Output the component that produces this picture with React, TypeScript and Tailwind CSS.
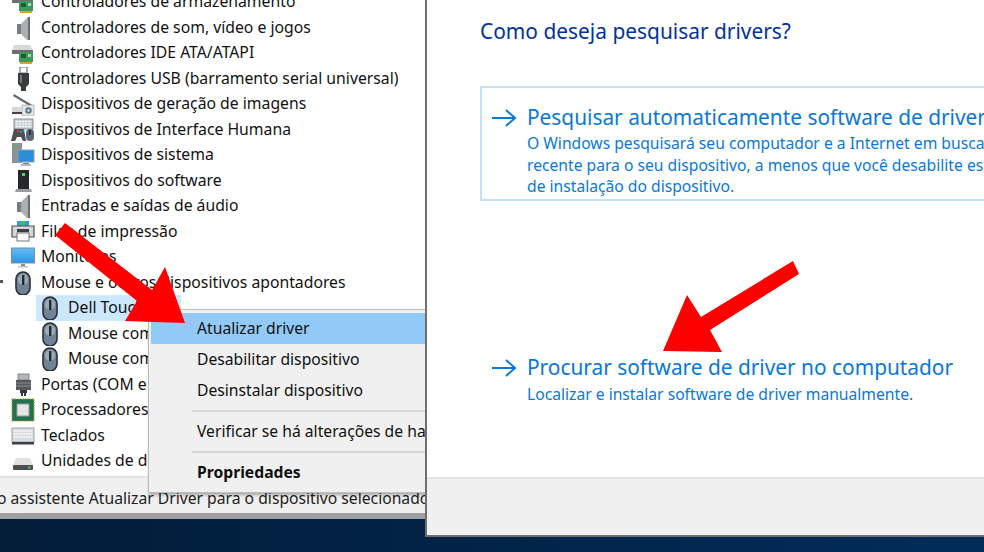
import React from "react";

type IconProps = { kind: string };

function Icon({ kind }: IconProps) {
  const c = "w-[24px] h-[24px] shrink-0";
  switch (kind) {
    case "storage":
    case "ide":
      return (
        <svg viewBox="0 0 24 24" className={c}>
          <path d="M3 4h16l3 6H1z" fill="#d8d8d8" />
          <rect x="1" y="9" width="21" height="4" fill="#6b6f72" />
          <rect x="8" y="11" width="14" height="10" fill="#3c9a5a" />
          <rect x="10" y="13" width="5" height="4" fill="#1e5a36" />
          <rect x="17" y="13" width="3" height="3" fill="#a6d8b0" />
          <rect x="9" y="21" width="12" height="2" fill="#d9a520" />
        </svg>
      );
    case "sound":
      return (
        <svg viewBox="0 0 24 24" className={c}>
          <path d="M6 8h4l7-7h1v24h-1l-7-7H6z" fill="#a9afb3" />
          <path d="M6 8h4v10H6z" fill="#777d82" />
          <path d="M17 1h2v24h-2z" fill="#676d70" />
        </svg>
      );
    case "usb":
      return (
        <svg viewBox="0 0 24 24" className={c}>
          <path d="M9 0h7v6H9z" fill="none" stroke="#777" strokeWidth="1.2" />
          <path d="M7 6h11v11l-3 3v4h-5v-4l-3-3z" fill="#3a3d40" />
          <rect x="9" y="8" width="2" height="8" fill="#777" />
        </svg>
      );
    case "imaging":
      return (
        <svg viewBox="0 0 24 24" className={c}>
          <path d="M3 2l20 12-1 2L2 4z" fill="#62676b" />
          <path d="M11 13h12v11H11z" fill="#e4e7e8" stroke="#8a9094" strokeWidth="0.6" />
          <circle cx="17.5" cy="18.5" r="3.2" fill="#5f7684" />
          <circle cx="17.5" cy="18.5" r="1.4" fill="#b9d3df" />
          <path d="M1 15h10v5H1z" fill="#d5d8d9" />
          <path d="M1 20h10v2H1z" fill="#3e4245" />
        </svg>
      );
    case "hid":
      return (
        <svg viewBox="0 0 24 24" className={c}>
          <rect x="3" y="1" width="19" height="10" fill="#cfd6dc" stroke="#6c7278" strokeWidth="0.8" />
          <path d="M5 3.5h15M5 6h15M5 8.5h15" stroke="#f6f8f9" strokeDasharray="2 1" />
          <path d="M3 11h10l2 12h-3l-2-4H6l-2 4H0z" fill="#4a4f55" />
          <circle cx="7" cy="13" r="1.4" fill="#d33" />
          <circle cx="10" cy="14" r="1.2" fill="#2aa84a" />
          <circle cx="12" cy="12.5" r="1.2" fill="#2a7ad8" />
          <rect x="15" y="11" width="8" height="12" rx="4" fill="#5c6772" />
          <rect x="18.2" y="12" width="1.5" height="5" fill="#1e2226" />
        </svg>
      );
    case "system":
      return (
        <svg viewBox="0 0 24 24" className={c}>
          <rect x="1" y="0" width="10" height="20" fill="#8d9294" />
          <rect x="3" y="2" width="3" height="2" fill="#4fc04f" />
          <rect x="7" y="7" width="16" height="12" fill="#2b8fd8" stroke="#8aa3b5" />
          <rect x="12" y="20" width="6" height="1" fill="#777" />
          <rect x="10" y="21" width="10" height="2" fill="#bbb" />
        </svg>
      );
    case "software":
      return (
        <svg viewBox="0 0 24 24" className={c}>
          <rect x="7" y="1" width="11" height="19" fill="#24282b" />
          <rect x="11" y="4" width="3" height="3" fill="#4fd35f" />
          <path d="M5 20h15l1 3H4z" fill="#9a9da0" />
        </svg>
      );
    case "printer":
      return (
        <svg viewBox="0 0 24 24" className={c}>
          <rect x="6" y="1" width="12" height="5" fill="#3a9ad8" />
          <rect x="10" y="1" width="4" height="5" fill="#3fbf6f" />
          <path d="M1 6h22v11H1z" fill="#d5d7d8" stroke="#4d5154" strokeWidth="1.2" />
          <rect x="6" y="9" width="12" height="3" fill="#3d4144" />
          <rect x="6" y="13" width="12" height="8" fill="#fbfbfb" stroke="#55585b" strokeWidth="0.8" />
        </svg>
      );
    case "monitor":
      return (
        <svg viewBox="0 0 24 24" className={c}>
          <defs>
            <linearGradient id="scr" x1="0" y1="0" x2="0" y2="1">
              <stop offset="0" stopColor="#62bdf5" />
              <stop offset="1" stopColor="#2e93e2" />
            </linearGradient>
          </defs>
          <rect x="0.5" y="3" width="23" height="15" fill="url(#scr)" stroke="#79909f" />
          <rect x="10" y="19" width="4" height="2" fill="#888" />
          <rect x="7" y="21" width="10" height="1.5" fill="#bfc3c5" />
        </svg>
      );
    case "mouse":
      return (
        <svg viewBox="0 0 24 24" className={c}>
          <rect x="5" y="1" width="14" height="23" rx="7" fill="#6f8296" stroke="#2b2e31" strokeWidth="1.6" />
          <rect x="7" y="3" width="10" height="11" rx="5" fill="#9cabb9" />
          <rect x="11" y="4" width="2.4" height="10" fill="#26292c" />
        </svg>
      );
    case "port":
      return (
        <svg viewBox="0 0 24 24" className={c}>
          <rect x="7" y="1" width="11" height="6" fill="#b5b8ba" stroke="#666" strokeWidth="0.7" />
          <rect x="5" y="7" width="15" height="10" fill="#55595c" />
          <path d="M5 10h15M5 13h15" stroke="#8a8e91" />
          <path d="M9 17h7v3h-1v3h-2v-3h-1v3h-2v-3H9z" fill="#33363a" />
        </svg>
      );
    case "cpu":
      return (
        <svg viewBox="0 0 24 24" className={c}>
          <rect x="1" y="1" width="22" height="22" fill="#23724f" stroke="#b09a2c" strokeWidth="1.2" strokeDasharray="1.5 1" />
          <rect x="6" y="6" width="12" height="12" fill="#e6e6e6" stroke="#9a9a9a" />
        </svg>
      );
    case "keyboard":
      return (
        <svg viewBox="0 0 24 24" className={c}>
          <rect x="1" y="4" width="22" height="14" fill="#d9dde0" stroke="#9ba0a4" />
          <path d="M3 7h18M3 10h18M3 13h18" stroke="#fbfcfc" strokeWidth="1.4" strokeDasharray="1.6 0.8" />
          <rect x="1" y="18" width="22" height="2.5" fill="#3d4043" />
        </svg>
      );
    case "disk":
      return (
        <svg viewBox="0 0 24 24" className={c}>
          <path d="M5 9h14l3 7H2z" fill="#e0e2e3" />
          <rect x="2" y="16" width="20" height="5" rx="1" fill="#4c5053" />
          <rect x="17" y="17.5" width="2.5" height="2" fill="#3fd04f" />
        </svg>
      );
    default:
      return <span className={c} />;
  }
}

const rows: { kind: string; label: string; child?: boolean; selected?: boolean }[] = [
  { kind: "storage", label: "Controladores de armazenamento" },
  { kind: "sound", label: "Controladores de som, vídeo e jogos" },
  { kind: "ide", label: "Controladores IDE ATA/ATAPI" },
  { kind: "usb", label: "Controladores USB (barramento serial universal)" },
  { kind: "imaging", label: "Dispositivos de geração de imagens" },
  { kind: "hid", label: "Dispositivos de Interface Humana" },
  { kind: "system", label: "Dispositivos de sistema" },
  { kind: "software", label: "Dispositivos do software" },
  { kind: "sound", label: "Entradas e saídas de áudio" },
  { kind: "printer", label: "Filas de impressão" },
  { kind: "monitor", label: "Monitores" },
  { kind: "mouse", label: "Mouse e outros dispositivos apontadores" },
  { kind: "mouse", label: "Dell Touchpad", child: true, selected: true },
  { kind: "mouse", label: "Mouse com", child: true },
  { kind: "mouse", label: "Mouse com", child: true },
  { kind: "port", label: "Portas (COM e" },
  { kind: "cpu", label: "Processadores" },
  { kind: "keyboard", label: "Teclados" },
  { kind: "disk", label: "Unidades de d" },
];

function Arrow({ x, y, w, h, points }: { x: number; y: number; w: number; h: number; points: string }) {
  return (
    <svg
      className="absolute pointer-events-none"
      style={{ left: x, top: y, width: w, height: h }}
      viewBox={`${x} ${y} ${w} ${h}`}
    >
      <polygon points={points} fill="#fe0000" />
    </svg>
  );
}

function LinkArrow() {
  return (
    <svg viewBox="0 0 26 20" className="w-[26px] h-[20px] shrink-0" fill="none" stroke="#0a78d7" strokeWidth="2">
      <path d="M1 10h23M15 2l9 8-9 8" />
    </svg>
  );
}

export default function App() {
  const font = { fontFamily: '"Noto Sans", sans-serif' };
  return (
    <div
      className="relative w-[984px] h-[552px] overflow-hidden flex bg-gradient-to-r from-[#021c38] to-[#012c5a] text-[#111]"
      style={font}
    >
      {/* Device manager */}
      <div className="relative w-[425px] h-[519px] shrink-0 flex flex-col overflow-hidden bg-[#f0f0f0] border-b-[6px] border-[#a0a0a0]">
        <div className="relative h-[478px] shrink-0 bg-white border-b-2 border-[#e2e2e2] overflow-hidden">
          <div className="absolute left-0 top-[280px] w-[3px] h-[3px] bg-[#555]" />
          <ul className="-mt-[10.6px] flex flex-col">
            {rows.map((r, i) => (
              <li
                key={i}
                className={`h-[25.5px] flex items-center whitespace-nowrap text-[15.75px] ${r.child ? "pl-[38px]" : "pl-[11px]"}`}
              >
                <div
                  className={`flex items-center h-[25.5px] gap-[6px] ${r.selected ? "bg-[#cce8ff] w-[145px] -ml-[2px] pl-[2px] overflow-hidden" : ""}`}
                >
                  <Icon kind={r.kind} />
                  <span>{r.label}</span>
                </div>
              </li>
            ))}
          </ul>
        </div>
        <div className="h-[35px] pt-[6px] flex items-center whitespace-nowrap overflow-hidden text-[15.7px] text-[#222] -ml-[3px]">
          o assistente Atualizar Driver para o dispositivo selecionado
        </div>

        {/* Context menu */}
        <div className="absolute left-[148px] top-[309px] w-[300px] h-[184px] bg-[#f0f0f0] border border-[#bdbdbd] shadow-[1px_2px_3px_rgba(0,0,0,0.3)] pt-[3px] pl-[2px] text-[15.7px] whitespace-nowrap">
          <div className="h-[31px] flex items-center pl-[46px] bg-[#91c9f7]">Atualizar driver</div>
          <div className="h-[31px] flex items-center pl-[46px]">Desabilitar dispositivo</div>
          <div className="h-[31px] flex items-center pl-[46px]">Desinstalar dispositivo</div>
          <div className="h-[10px] flex items-center pl-[41px]">
            <div className="h-[2px] w-full bg-[#d7d7d7]" />
          </div>
          <div className="h-[31px] flex items-center pl-[46px] w-[276px] overflow-hidden">Verificar se há alterações de ha</div>
          <div className="h-[10px] flex items-center pl-[41px]">
            <div className="h-[2px] w-full bg-[#d7d7d7]" />
          </div>
          <div className="h-[31px] flex items-center pl-[46px] font-bold">Propriedades</div>
        </div>
      </div>

      {/* Wizard */}
      <div className="relative z-10 w-[559px] h-[537px] shrink-0 flex flex-col bg-white border-l-2 border-b-2 border-[#6f6f6f]">
        <div className="flex-1 min-h-0 pl-[53px] pt-[16px] overflow-hidden whitespace-nowrap">
          <h1 className="text-[20.9px] leading-[30px] text-[#003399] font-normal">Como deseja pesquisar drivers?</h1>
          <div className="mt-[40px] w-[600px] h-[115px] border-2 border-[#c6e0f6] flex gap-[10px] pl-[9px] pt-[14px]">
            <div className="pt-[6px]"><LinkArrow /></div>
            <div>
              <div className="text-[20.85px] leading-[30px] text-[#0a78d7]">Pesquisar automaticamente software de driver</div>
              <div className="mt-[1px] text-[15.66px] leading-[21.5px] text-[#0a78d7]">
                <div>O Windows pesquisará seu computador e a Internet em busca</div>
                <div>recente para o seu dispositivo, a menos que você desabilite es</div>
                <div>de instalação do dispositivo.</div>
              </div>
            </div>
          </div>
          <div className="mt-[151px] flex gap-[10px] pl-[11px]">
            <div className="pt-[6px]"><LinkArrow /></div>
            <div>
              <div className="text-[20.85px] leading-[30px] text-[#0a78d7]">Procurar software de driver no computador</div>
              <div className="mt-[2px] text-[15.66px] leading-[21.5px] text-[#0a78d7]">Localizar e instalar software de driver manualmente.</div>
            </div>
          </div>
        </div>
        <div className="h-[58px] shrink-0 bg-[#f0f0f0] border-t-2 border-[#e2e2e2]" />
      </div>

      {/* Red annotation arrows */}
      <div className="absolute inset-0 z-20 pointer-events-none">
        <Arrow x={50} y={220} w={140} h={105} points="65,223 152,290 165,267 185,323 125,321 137,301 55,235" />
        <Arrow x={660} y={258} w={142} h={96} points="793,261 799,274 710,330 722,352 663,351 687,295 701,317" />
      </div>
    </div>
  );
}
